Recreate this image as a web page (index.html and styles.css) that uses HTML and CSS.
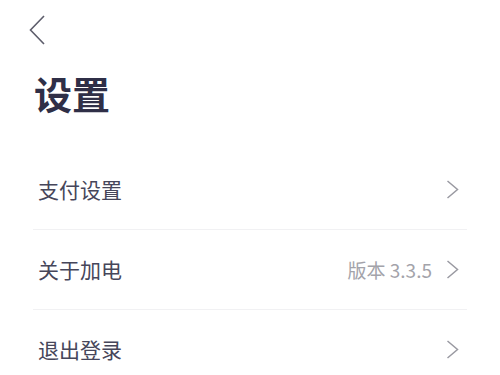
FILE: index.html
```html
<!DOCTYPE html>
<html lang="zh">
<head>
<meta charset="utf-8">
<link rel="stylesheet" href="styles.css">
</head>
<body>
<div class="page">
  <div class="nav">
    <svg class="back" width="16" height="30" viewBox="0 0 16 30"><path d="M15 1 L1.5 15 L15 29" fill="none" stroke="#5d5d6b" stroke-width="1.6"/></svg>
  </div>
  <h1 class="title">设置</h1>
  <ul class="list">
    <li class="row"><span class="label">支付设置</span><span class="right"><svg class="chev" width="13" height="19" viewBox="0 0 13 19"><path d="M1.5 1 L11.5 9.5 L1.5 18" fill="none" stroke="#9a9aa2" stroke-width="1.5"/></svg></span></li>
    <li class="row"><span class="label">关于加电</span><span class="right"><span class="meta">版本 3.3.5</span><svg class="chev" width="13" height="19" viewBox="0 0 13 19"><path d="M1.5 1 L11.5 9.5 L1.5 18" fill="none" stroke="#9a9aa2" stroke-width="1.5"/></svg></span></li>
    <li class="row"><span class="label">退出登录</span><span class="right"><svg class="chev" width="13" height="19" viewBox="0 0 13 19"><path d="M1.5 1 L11.5 9.5 L1.5 18" fill="none" stroke="#9a9aa2" stroke-width="1.5"/></svg></span></li>
  </ul>
</div>
</body>
</html>
```
FILE: styles.css
```css
html, body {
  margin: 0;
  padding: 0;
  background: #ffffff;
}
body {
  font-family: "Noto Sans CJK SC", "Noto Sans", sans-serif;
  width: 500px;
  height: 375px;
  overflow: hidden;
}
.page {
  display: flex;
  flex-direction: column;
}
.nav {
  padding: 15px 0 0 29px;
  height: 30px;
}
.back {
  display: block;
}
.title {
  margin: 23px 0 0 34px;
  font-size: 38px;
  line-height: 50px;
  font-weight: 700;
  color: #2f2f47;
}
.list {
  list-style: none;
  margin: 32px 33px 0 33px;
  padding: 0;
}
.row {
  display: flex;
  align-items: center;
  justify-content: space-between;
  height: 79px;
  border-bottom: 1px solid #f1f1f3;
  padding: 0 8px 0 5px;
}
.label {
  font-size: 21px;
  color: #46465a;
  line-height: 1;
}
.right {
  display: flex;
  align-items: center;
  gap: 14px;
}
.meta {
  font-family: "Noto Sans CJK SC", "Liberation Sans", sans-serif;
  font-size: 19px;
  color: #a3a3aa;
}
.chev {
  display: block;
}
```
